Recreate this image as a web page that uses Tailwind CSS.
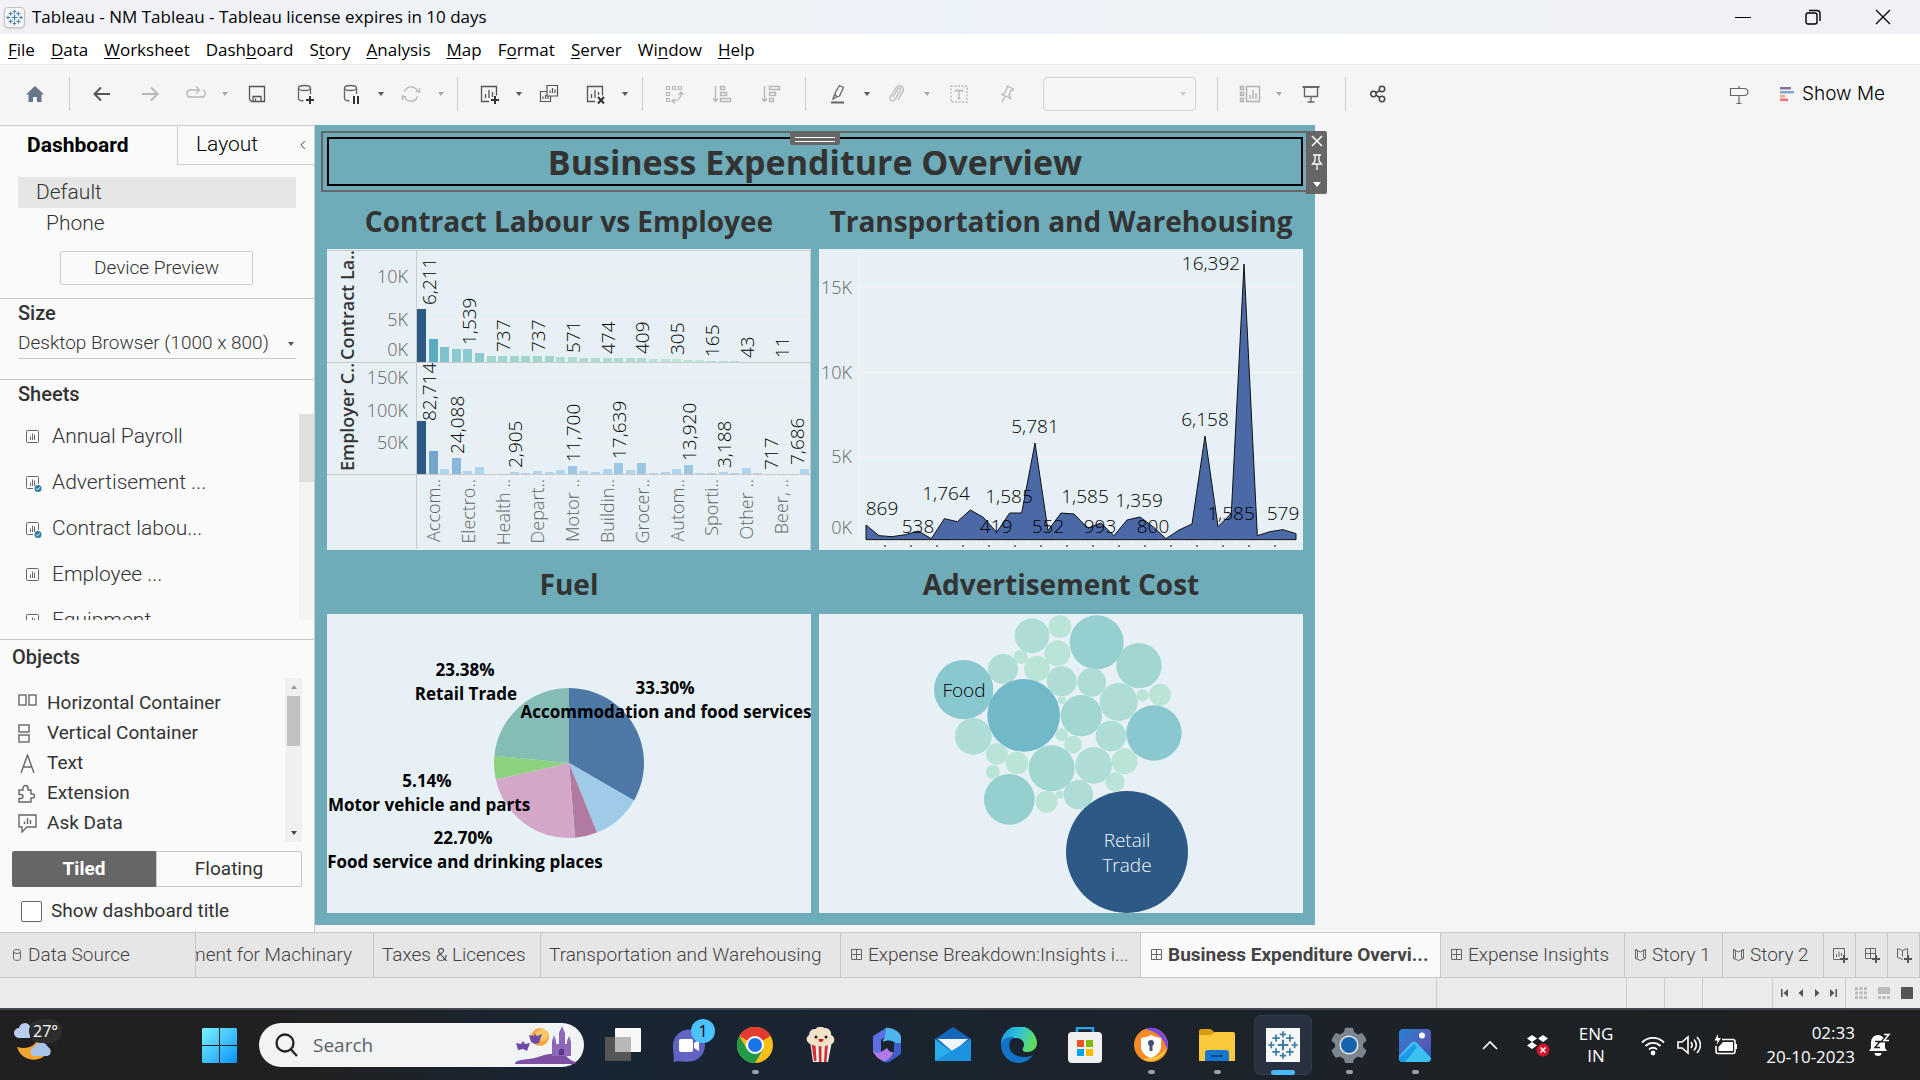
<!DOCTYPE html>
<html lang="en">
<head>
<meta charset="utf-8">
<title>Tableau - NM Tableau</title>
<script src="https://cdn.jsdelivr.net/npm/@tailwindcss/browser@4"></script>
</head>
<body class="flex min-h-screen flex-col overflow-hidden bg-[#f5f5f5] font-['Open_Sans','Noto_Sans',sans-serif] text-[#333]">

<svg class="hidden">
  <symbol id="tableau" viewBox="0 0 32 32">
    <g fill="none" stroke="#3a7ca5" stroke-width="1.6">
      <path stroke-width="2" d="M16 11v10M11 16h10"/>
      <path d="M16 3v6M13 6h6M16 23v6M13 26h6M5 13v6M2 16h6M27 13v6M24 16h6M9.500 6v7M6 9.500h7M22.500 6v7M19 9.500h7M9.500 19v7M6 22.500h7M22.500 19v7M19 22.500h7"/>
    </g>
  </symbol>
  <symbol id="sheet" viewBox="0 0 18 18">
    <g fill="none" stroke="#666" stroke-width="1"><rect x="2.500" y="2.500" width="12" height="12" rx="1"/><path d="M6.500 12V8.500M8.500 12V5.500M10.500 12V6.500"/></g>
  </symbol>
  <symbol id="sheetused" viewBox="0 0 18 18">
    <g fill="none" stroke="#666" stroke-width="1"><path d="M9 14.500H3.500a1 1 0 0 1-1-1v-10a1 1 0 0 1 1-1h10a1 1 0 0 1 1 1V10M6.500 12V8.500M8.500 12V5.500M10.500 12V6.500"/></g>
    <circle cx="14" cy="14.500" r="3.500" fill="#2f7f9f"/><path d="M12.300 14.500l1.300 1.300 2.200-2.500" fill="none" stroke="#fff" stroke-width="1"/>
  </symbol>
  <symbol id="dash" viewBox="0 0 14 14"><path d="M1.500 1.500h10v10h-10zM6.500 1.500v10M1.500 6.500h10" fill="none" stroke="#666"/></symbol>
  <symbol id="story" viewBox="0 0 14 14"><path d="M1.500 1.500l2 1v7l-2 1zM11.500 1.500l-2 1v7l2 1zM1.500 1.500l5 2.500 5-2.500M1.500 10.500l5 2 5-2" fill="none" stroke="#666"/></symbol>
  <symbol id="caret" viewBox="0 0 10 10"><path d="M2 3h6L5 7z" fill="currentColor"/></symbol>
</svg>

<header class="flex h-[34px] shrink-0 items-center bg-gradient-to-r from-[#f1f1f6] via-[#ecf3f8] to-[#f1f1f6] pr-[2px] text-black">
  <svg class="ml-1 size-[21px] rounded-sm border border-[#c4c4c4] bg-[#f7f7f7] shadow"><use href="#tableau"/></svg>
  <h1 class="ml-[7px] text-[17px]">Tableau - NM Tableau - Tableau license expires in 10 days</h1>
  <div class="ml-auto flex items-center">
    <button class="flex h-[34px] w-[70px] items-center justify-center" aria-label="Minimize"><svg class="size-4" viewBox="0 0 16 16"><path d="M0 8.500h16" stroke="#000"/></svg></button>
    <button class="flex h-[34px] w-[70px] items-center justify-center" aria-label="Restore"><svg class="size-4" viewBox="0 0 16 16" fill="none" stroke="#000" stroke-width="1.400"><rect x="1" y="4" width="11" height="11" rx="2"/><path d="M4 1.500h8a3 3 0 0 1 3 3v7.500"/></svg></button>
    <button class="flex h-[34px] w-[70px] items-center justify-center" aria-label="Close"><svg class="size-4" viewBox="0 0 16 16"><path d="M1 1l14 14M15 1L1 15" stroke="#000" stroke-width="1.300"/></svg></button>
  </div>
</header>

<nav class="flex h-[30px] shrink-0 items-center gap-4 bg-white pl-2 pt-[2px] text-[17px] text-black underline-offset-2" aria-label="Menu">
  <a href="#"><u>F</u>ile</a><a href="#"><u>D</u>ata</a><a href="#"><u>W</u>orksheet</a><a href="#">Dash<u>b</u>oard</a><a href="#">S<u>t</u>ory</a><a href="#"><u>A</u>nalysis</a><a href="#"><u>M</u>ap</a><a href="#">F<u>o</u>rmat</a><a href="#"><u>S</u>erver</a><a href="#">Wi<u>n</u>dow</a><a href="#"><u>H</u>elp</a>
</nav>

<div class="flex h-[61px] shrink-0 items-center border-t border-[#ececec] bg-[#f5f5f5] pb-[2px] pl-3 text-[#555]">
  <button class="flex w-[46px] justify-center" aria-label="Start page"><svg class="size-6" viewBox="0 0 24 24" fill="#66758a"><path d="M12 4l9 8.500h-2.500V20h-4.500v-5h-4v5H5.500v-7.500H3z"/></svg></button>
  <i class="ml-[11px] h-[34px] w-px bg-[#ccc]"></i>
  <button class="ml-2 flex w-12 justify-center" aria-label="Undo"><svg class="size-6" viewBox="0 0 24 24" fill="none" stroke="#555" stroke-width="2"><path d="M20 12H5M11 5.500L4.500 12l6.500 6.500"/></svg></button>
  <button class="flex w-12 justify-center" aria-label="Redo"><svg class="size-6" viewBox="0 0 24 24" fill="none" stroke="#b8b8b8" stroke-width="2"><path d="M4 12h15M13 5.500l6.500 6.500-6.500 6.500"/></svg></button>
  <button class="flex w-11 justify-center" aria-label="Replay"><svg class="size-6" viewBox="0 0 24 24" fill="none" stroke="#b8b8b8" stroke-width="1.300"><path d="M14 8H6a3 3 0 0 0-3 3v1a3 3 0 0 0 3 3h12a3 3 0 0 0 3-3v-1a3 3 0 0 0-2-2.800M12 4.500L15.500 8 12 11.500"/></svg></button>
  <button class="flex w-[14px] justify-center text-[#aaa]" aria-label="Replay options"><svg class="size-[10px]"><use href="#caret"/></svg></button>
  <button class="flex w-[50px] justify-center" aria-label="Save"><svg class="size-6" viewBox="0 0 24 24" fill="none" stroke="#555" stroke-width="1.300"><path d="M4.500 4.500h15v15h-13l-2-2zM8 19.500v-5h8v5M10.500 19v-2.500"/></svg></button>
  <button class="flex w-[46px] justify-center" aria-label="New data source"><svg class="size-6" viewBox="0 0 24 24" fill="none" stroke="#666" stroke-width="1.300"><ellipse cx="11.500" cy="6" rx="6" ry="2.500"/><path d="M5.500 6v10.500c0 1.500 2 2.300 5 2.500M17.500 6v6"/><path stroke="#333" stroke-width="2" d="M17 14v8M13 18h8"/></svg></button>
  <button class="flex w-[46px] justify-center" aria-label="Pause updates"><svg class="size-6" viewBox="0 0 24 24" fill="none" stroke="#666" stroke-width="1.300"><ellipse cx="11.500" cy="6" rx="6" ry="2.500"/><path d="M5.500 6v10.500c0 1.500 2 2.300 5 2.500M17.500 6v6"/><path stroke="#333" stroke-width="2" d="M15 14v8M19 14v8"/></svg></button>
  <button class="flex w-[14px] justify-center" aria-label="Pause options"><svg class="size-[10px]"><use href="#caret"/></svg></button>
  <button class="flex w-[46px] justify-center" aria-label="Refresh"><svg class="size-6" viewBox="0 0 24 24" fill="none" stroke="#b8b8b8" stroke-width="1.400"><path d="M5.500 9.500a7 7 0 0 1 13-.5M20.500 6v4l-3.500-1M18.500 14.500a7 7 0 0 1-13 .5M3.500 18v-4l3.500 1"/></svg></button>
  <button class="flex w-[14px] justify-center text-[#aaa]" aria-label="Refresh options"><svg class="size-[10px]"><use href="#caret"/></svg></button>
  <i class="ml-[9px] h-[34px] w-px bg-[#ccc]"></i>
  <button class="ml-2 flex w-[46px] justify-center" aria-label="New worksheet"><svg class="size-6" viewBox="0 0 24 24" fill="none" stroke="#555" stroke-width="1.300"><path d="M12 19.500H4.500v-15h15v9M8.500 16v-4M12 16V8M15.500 15v-5"/><path stroke="#333" stroke-width="2" d="M18 14v8M14 18h8"/></svg></button>
  <button class="flex w-[14px] justify-center" aria-label="New worksheet options"><svg class="size-[10px]"><use href="#caret"/></svg></button>
  <button class="flex w-[46px] justify-center" aria-label="Duplicate"><svg class="size-6" viewBox="0 0 24 24" fill="none" stroke="#555" stroke-width="1.200"><path d="M10 3.500h10.500v10.500H10zM10 9.500H3.500v10h10V14M13 11V8.500M15.500 11V6M18 11V7.500M6 17v-2.500M8.500 17v-4M11 17v-3"/></svg></button>
  <button class="flex w-[46px] justify-center" aria-label="Clear sheet"><svg class="size-6" viewBox="0 0 24 24" fill="none" stroke="#555" stroke-width="1.300"><path d="M12 19.500H4.500v-15h15v9M8.500 16v-4M12 16V8M15.500 13v-3"/><path stroke="#333" stroke-width="2" d="M15 15l6 6.500M21 15l-6 6.500"/></svg></button>
  <button class="flex w-[14px] justify-center" aria-label="Clear options"><svg class="size-[10px]"><use href="#caret"/></svg></button>
  <i class="ml-[10px] h-[34px] w-px bg-[#ccc]"></i>
  <button class="ml-2 flex w-[46px] justify-center" aria-label="Swap rows and columns"><svg class="size-6" viewBox="0 0 24 24" fill="none" stroke="#b8b8b8" stroke-width="1.200"><path d="M4.500 4.500h3v3h-3zM10.500 4.500h3v3h-3zM16.500 4.500h3v3h-3zM4.500 10.500h3v3h-3zM4.500 16.500h3v3h-3zM19 11c0 5-3 8-8 8M16.500 13l2.500-3 2.500 3M13 21.500l-3-2.500 3-2.500"/></svg></button>
  <button class="flex w-[50px] justify-center" aria-label="Sort ascending"><svg class="size-6" viewBox="0 0 24 24" fill="none" stroke="#b8b8b8" stroke-width="1.400"><path d="M5.500 4v15M3 16.500l2.500 3 2.500-3M10.500 4.500h4v3h-4zM10.500 10.500h6v3h-6zM10.500 16.500h10v3h-10z"/></svg></button>
  <button class="flex w-12 justify-center" aria-label="Sort descending"><svg class="size-6" viewBox="0 0 24 24" fill="none" stroke="#b8b8b8" stroke-width="1.400"><path d="M5.500 4v15M3 16.500l2.500 3 2.500-3M10.500 4.500h10v3h-10zM10.500 10.500h6v3h-6zM10.500 16.500h4v3h-4z"/></svg></button>
  <i class="ml-[10px] h-[34px] w-px bg-[#ccc]"></i>
  <button class="ml-[10px] flex w-11 justify-center" aria-label="Highlight"><svg class="size-6" viewBox="0 0 24 24" fill="none" stroke="#666" stroke-width="1.300"><path d="M9 11l4.500-7.500 4 2L13.500 14l-3 1zM9 11l1.500 4M8.500 12.500L7 17l3-1.500"/><path stroke-width="2" d="M5 20.500h13"/></svg></button>
  <button class="flex w-[14px] justify-center" aria-label="Highlight options"><svg class="size-[10px]"><use href="#caret"/></svg></button>
  <button class="flex w-[46px] justify-center" aria-label="Group"><svg class="size-6" viewBox="0 0 24 24" fill="none" stroke="#b8b8b8" stroke-width="1.300"><path d="M8 15l5-8.500c1-1.500 3.500 0 2.500 1.700L10 17.500c-2 3-6.500.5-4.700-2.500l6-9.500c2.500-4 9-.5 6.500 4L13 18"/></svg></button>
  <button class="flex w-[14px] justify-center text-[#aaa]" aria-label="Group options"><svg class="size-[10px]"><use href="#caret"/></svg></button>
  <button class="flex w-[50px] justify-center" aria-label="Show mark labels"><svg class="size-6" viewBox="0 0 24 24" fill="none" stroke="#b8b8b8" stroke-width="1.300"><rect x="4" y="4" width="16" height="16" stroke-dasharray="2 1.500"/><path d="M8.500 10V8.500h7V10M12 8.500V16M10.500 16.500h3"/></svg></button>
  <button class="flex w-[46px] justify-center" aria-label="Fix axes"><svg class="size-6" viewBox="0 0 24 24" fill="none" stroke="#b8b8b8" stroke-width="1.300"><path d="M12 4l6.500 3-1 1.500-1.500-.2-2 4.700 1.500 3.500-8.500-4L9.500 11l2.500-4.500zM10 14.500L7 20"/></svg></button>
  <div class="relative ml-[13px] flex items-center text-[#ccc]">
    <select class="h-[34px] w-[153px] appearance-none rounded-sm border border-[#d4d4d4] bg-[#f5f5f5]" aria-label="Fit" disabled><option></option></select>
    <svg class="absolute right-2 size-[10px]"><use href="#caret"/></svg>
  </div>
  <i class="ml-[21px] h-[34px] w-px bg-[#ccc]"></i>
  <button class="ml-[10px] flex w-11 justify-center" aria-label="Show cards"><svg class="size-6" viewBox="0 0 24 24" fill="none" stroke="#b0b0b0" stroke-width="1.400"><path d="M2.500 4.500h3v3h-3zM2.500 10.500h3v3h-3zM2.500 16.500h3v3h-3zM8.500 4.500h13v15h-13zM12 17v-4M15 17V8M18 17v-6"/></svg></button>
  <button class="flex w-[14px] justify-center text-[#aaa]" aria-label="Card options"><svg class="size-[10px]"><use href="#caret"/></svg></button>
  <button class="flex w-[50px] justify-center" aria-label="Presentation mode"><svg class="size-6" viewBox="0 0 24 24" fill="none" stroke="#666" stroke-width="1.400"><path stroke-width="2" d="M3.500 5h17"/><path d="M5.500 6v8.500h13V6M12 14.500v5M8.500 20h7"/></svg></button>
  <i class="ml-[9px] h-[34px] w-px bg-[#ccc]"></i>
  <button class="ml-2 flex w-12 justify-center" aria-label="Share"><svg class="size-6" viewBox="0 0 24 24" fill="none" stroke="#444" stroke-width="1.500"><circle cx="7.500" cy="12" r="2.700"/><circle cx="16" cy="7" r="2.700"/><circle cx="16" cy="17" r="2.700"/><path d="M10 10.800L13.700 8.500M10 13.200l3.700 2.300"/></svg></button>
  <div class="ml-auto flex items-center pr-[35px]">
    <button aria-label="Guide"><svg class="size-6" viewBox="0 0 24 24" fill="none" stroke="#666" stroke-width="1.200"><path d="M3.500 6.500h14c2 0 3.500 2 3.500 3.500s-1.500 3.500-3.500 3.500h-14zM12 4v2.500M12 13.500V21M9.500 21.500h5"/></svg></button>
    <button class="ml-[29px] flex items-center gap-2 font-['Inter',sans-serif] text-[19px] font-light text-black"><svg class="size-[14px]" viewBox="0 0 14 14"><path fill="#8a6f9b" d="M0 0h11v2.500H0z"/><path fill="#7fa7cf" d="M0 4h14v2.500H0z"/><path fill="#f5a67c" d="M0 8h5v2.500H0z"/><path fill="#fb6d82" d="M0 11.500h8V14H0z"/></svg>Show Me</button>
  </div>
</div>

<main class="flex flex-1">
  <aside class="flex w-[315px] shrink-0 flex-col border-r border-t border-[#ccc] bg-[#fafafa] font-['Roboto',sans-serif] text-[19px] font-light">
    <div class="flex h-[39px] text-[21px]">
      <button class="w-[177px] pl-[27px] text-left font-bold text-black">Dashboard</button>
      <button class="flex flex-1 items-center justify-between border-b border-l border-[#ccc] pl-[18px] pr-[7px] text-black">Layout<svg class="size-2" viewBox="0 0 8 10"><path d="M6.500 0L1.500 5l5 5" fill="none" stroke="#666" stroke-width="1.300"/></svg></button>
    </div>
    <ul class="mt-3 px-[18px] text-[21px]">
      <li class="h-[31px] bg-[#e6e6e6] pl-[18px] leading-[30px]">Default</li>
      <li class="h-[31px] pl-[28px] leading-[30px]">Phone</li>
    </ul>
    <button class="ml-[60px] mt-3 h-[34px] w-[193px] rounded-xs border border-[#ccc]">Device Preview</button>
    <section class="mt-[13px] h-[81px] border-t border-[#c8c8c8] px-[18px]">
      <h2 class="h-[30px] text-xl font-medium leading-7">Size</h2>
      <div class="relative flex items-center">
        <select class="h-[30px] w-full appearance-none border-b border-[#c8c8c8] text-[19px] font-light outline-none" aria-label="Dashboard size"><option>Desktop Browser (1000 x 800)</option></select>
        <svg class="absolute right-0 size-[10px] text-[#555]"><use href="#caret"/></svg>
      </div>
    </section>
    <section class="h-[260px] border-t border-[#c8c8c8]">
      <h2 class="h-[34px] pl-[18px] text-xl font-medium leading-7">Sheets</h2>
      <div class="flex h-[206px] overflow-hidden">
        <ul class="flex-1 pl-6 text-[21px]">
          <li class="flex h-[46px] items-center gap-[10px]"><svg class="size-[18px]"><use href="#sheet"/></svg>Annual Payroll</li>
          <li class="flex h-[46px] items-center gap-[10px]"><svg class="size-[18px]"><use href="#sheetused"/></svg>Advertisement ...</li>
          <li class="flex h-[46px] items-center gap-[10px]"><svg class="size-[18px]"><use href="#sheetused"/></svg>Contract labou...</li>
          <li class="flex h-[46px] items-center gap-[10px]"><svg class="size-[18px]"><use href="#sheet"/></svg>Employee ...</li>
          <li class="flex h-[46px] items-center gap-[10px]"><svg class="size-[18px]"><use href="#sheet"/></svg>Equipment ...</li>
        </ul>
        <div class="w-[15px] bg-[#f3f3f3]"><div class="h-[68px] bg-[#e0e0e0]"></div></div>
      </div>
    </section>
    <section class="flex-1 border-t border-[#c8c8c8] px-3 font-normal">
      <h2 class="h-[38px] text-xl font-medium leading-[34px]">Objects</h2>
      <div class="flex">
        <ul class="flex-1 pl-[6px] pt-[10px]">
          <li class="flex h-[30px] items-center gap-[10px]"><svg class="size-[19px]" viewBox="0 0 19 19" fill="none" stroke="#666" stroke-width="1.400"><rect x="1" y="1" width="7" height="10"/><rect x="11" y="1" width="7" height="10"/></svg>Horizontal Container</li>
          <li class="flex h-[30px] items-center gap-[10px]"><svg class="size-[19px]" viewBox="0 0 19 19" fill="none" stroke="#666" stroke-width="1.400"><rect x="1" y="1" width="10" height="7"/><rect x="1" y="11" width="10" height="7"/></svg>Vertical Container</li>
          <li class="flex h-[30px] items-center gap-[10px]"><svg class="size-[19px]" viewBox="0 0 19 19" fill="none" stroke="#666" stroke-width="1.400"><path d="M3 19L9.500 1 16 19M5.500 13h8"/></svg>Text</li>
          <li class="flex h-[30px] items-center gap-[10px]"><svg class="size-[19px]" viewBox="0 0 19 19" fill="none" stroke="#666" stroke-width="1.400"><path d="M1 8V6h4V4a2.500 2.500 0 1 1 5 0v2h3v4h1.500a2 2 0 1 1 0 4H13v4H1v-3.500h2a2 2 0 1 0 0-4H1z"/></svg>Extension</li>
          <li class="flex h-[30px] items-center gap-[10px]"><svg class="size-[19px]" viewBox="0 0 19 19" fill="none" stroke="#666" stroke-width="1.400"><path d="M1 1h17v12H9l-5 5v-5H1zM6.500 10V7.500M9.500 10V4M12.500 10V6"/></svg>Ask Data</li>
        </ul>
        <div class="flex h-[164px] w-[17px] flex-col items-center justify-between bg-[#f0f0f0] text-[#999]">
          <div class="flex flex-col items-center"><svg class="my-1 size-[10px] rotate-180"><use href="#caret"/></svg><div class="h-[50px] w-[13px] bg-[#c1c1c1]"></div></div>
          <svg class="mb-1 size-[10px] text-[#444]"><use href="#caret"/></svg>
        </div>
      </div>
      <div class="mt-[9px] flex h-9">
        <button class="flex-1 rounded-l-xs bg-[#666] font-bold text-white">Tiled</button>
        <button class="flex-1 rounded-r-xs border border-[#c8c8c8]">Floating</button>
      </div>
      <label class="ml-[9px] mt-[10px] flex items-center gap-[9px]"><input type="checkbox" class="size-[21px] appearance-none rounded-xs border border-[#666] bg-white">Show dashboard title</label>
    </section>
  </aside>

  <div class="flex-1 bg-[#f5f5f5]">
    <article class="h-[800px] w-[1000px] bg-[#6eacb9] px-3 pt-[6px]">
      <div class="relative -mx-[6px] h-[61px] border-2 border-[#666] p-1">
        <h2 class="flex h-full items-center justify-center border-2 border-black pt-[2px] text-[34px] font-bold">Business Expenditure Overview</h2>
        <div class="absolute left-1/2 top-0 flex h-3 w-[50px] -translate-x-1/2 flex-col justify-center gap-[3px] rounded-b-xs bg-[#666] px-[5px]"><i class="h-px bg-white"></i><i class="h-px bg-white"></i></div>
        <div class="absolute -right-[20px] -top-[2px] flex h-[63px] w-[21px] flex-col items-center justify-around rounded-r-xs bg-[#666]">
          <svg class="size-3" viewBox="0 0 12 12"><path d="M1 1l10 10M11 1L1 11" stroke="#fff" stroke-width="1.500"/></svg>
          <svg class="h-4 w-3" viewBox="0 0 12 16" fill="none" stroke="#fff" stroke-width="1.300"><path d="M2 1h8M4 1v6l-2.500 3h9L8 7V1M6 10v6"/></svg>
          <svg class="size-3 text-white" viewBox="0 0 12 12"><path d="M2 4h8L6 9z" fill="#fff"/></svg>
        </div>
      </div>
      <div class="grid grid-cols-2 gap-x-2">
        <section>
          <h3 class="flex h-[57px] items-center justify-center whitespace-nowrap text-[28px] font-bold">Contract Labour vs Employee</h3>
          <svg id="bars" class="h-[301px] w-full bg-[#e6f0f5]" viewBox="0 0 484 301" font-size="18">
            <path d="M90 27.500h394M90 70.500h394M90 128.500h394M90 161.500h394M90 193.500h394" stroke="#f1f1f1"/>
            <path d="M0 1.500h484M0 113.500h484M0 225.500h484M89.500 1v299M483.500 1v299" stroke="#c9c9c9"/>
          </svg>
        </section>
        <section>
          <h3 class="flex h-[57px] items-center justify-center whitespace-nowrap text-[28px] font-bold">Transportation and Warehousing</h3>
          <svg id="area" class="h-[301px] w-full bg-[#e6f0f5]" viewBox="0 0 484 301" font-size="18">
            <path d="M35 38.500h449M35 123.500h449M35 207.500h449M35 291.500h449M40.500 0v295" stroke="#f3f3f3"/>
            <svg width="484" height="301" viewBox="12 27 1452 903"><path fill="#4a69a6" stroke="#111" stroke-width="3" d="M153 899V855L192 887L231 890L271 884L310 873L349 896L388 836L427 845L466 810L505 832L545 877L584 819L620 819L660 609L699 872L738 819L777 822L819 865L857 849L897 887L936 840L975 831L1014 860L1053 896L1092 870L1131 852L1170 588L1209 860L1249 820L1287 72L1327 887L1365 875L1404 869L1443 881V899Z"/></svg>
          </svg>
        </section>
        <section>
          <h3 class="flex h-16 items-center justify-center pt-1 text-[28px] font-bold">Fuel</h3>
          <svg id="pie" class="h-[299px] w-full bg-[#e6f0f5]" viewBox="0 0 484 299" font-size="17" font-weight="700">
            <path fill="#4e79a7" d="M242 149V74A75 75 0 0 1 307 186.400Z"/>
            <path fill="#a0cbe8" d="M242 149L307 186.400A75 75 0 0 1 269.900 218.600Z"/>
            <path fill="#b07aa1" d="M242 149L269.900 218.600A75 75 0 0 1 248 223.800Z"/>
            <path fill="#d4a6c8" d="M242 149L248 223.800A75 75 0 0 1 168.800 165.500Z"/>
            <path fill="#8cd17d" d="M242 149L168.800 165.500A75 75 0 0 1 167.400 141.700Z"/>
            <path fill="#86bcb6" d="M242 149L167.400 141.700A75 75 0 0 1 242 74Z"/>
          </svg>
        </section>
        <section>
          <h3 class="flex h-16 items-center justify-center pt-1 text-[28px] font-bold">Advertisement Cost</h3>
          <svg id="bubbles" class="h-[299px] w-full bg-[#e6f0f5]" viewBox="0 0 484 299" font-size="19" font-weight="300">
            <svg id="circles" width="484" height="299" viewBox="-243 42 1452 897"></svg>
          </svg>
        </section>
      </div>
    </article>
  </div>
</main>

<nav class="flex h-[46px] shrink-0 items-stretch overflow-hidden border-y border-[#c8c8c8] bg-[#e6e6e6] font-['Roboto',sans-serif] text-[19px] font-light whitespace-nowrap text-[#444]" aria-label="Sheets">
  <a href="#" class="flex w-[196px] items-center gap-1 border-r border-[#c8c8c8] pl-3"><svg class="h-[14px] w-3" viewBox="0 0 12 14" fill="none" stroke="#666"><ellipse cx="5" cy="3.500" rx="3.500" ry="2"/><path d="M1.500 3.500v7c0 2.500 7 2.500 7 0v-7"/></svg>Data Source</a>
  <a href="#" class="flex w-[178px] items-center justify-end overflow-hidden border-r border-[#c8c8c8] pr-[21px]">ment for Machinary</a>
  <a href="#" class="flex w-[167px] items-center border-r border-[#c8c8c8] pl-2">Taxes &amp; Licences</a>
  <a href="#" class="flex w-[300px] items-center border-r border-[#c8c8c8] pl-2">Transportation and Warehousing</a>
  <a href="#" class="flex w-[300px] items-center gap-1 border-r border-[#c8c8c8] pl-[9px]"><svg class="size-[14px]"><use href="#dash"/></svg>Expense Breakdown:Insights i...</a>
  <a href="#" class="flex w-[300px] items-center gap-1 border-r border-[#c8c8c8] bg-[#fafafa] pl-[9px] font-bold"><svg class="size-[14px]"><use href="#dash"/></svg>Business Expenditure Overvi...</a>
  <a href="#" class="flex w-[184px] items-center gap-1 border-r border-[#c8c8c8] pl-[9px]"><svg class="size-[14px]"><use href="#dash"/></svg>Expense Insights</a>
  <a href="#" class="flex w-[98px] items-center gap-1 border-r border-[#c8c8c8] pl-[9px]"><svg class="size-[14px]"><use href="#story"/></svg>Story 1</a>
  <a href="#" class="flex w-[101px] items-center gap-1 border-r border-[#c8c8c8] pl-[9px]"><svg class="size-[14px]"><use href="#story"/></svg>Story 2</a>
  <button class="flex flex-1 items-center justify-center border-r border-[#c8c8c8]" aria-label="New worksheet"><svg class="size-4" viewBox="0 0 16 16" fill="none" stroke="#666"><path d="M8 12.500H1.500v-11h11V8M4.500 10V7M7 10V4.500M9.500 9V6"/><path stroke="#555" stroke-width="2" d="M12 8v8M8 12h8"/></svg></button>
  <button class="flex flex-1 items-center justify-center border-r border-[#c8c8c8]" aria-label="New dashboard"><svg class="size-4" viewBox="0 0 16 16" fill="none" stroke="#666"><path d="M8 11.500H1.500v-10h10V8M6.500 1.500v10M1.500 6.500h10"/><path stroke="#555" stroke-width="2" d="M12 8v8M8 12h8"/></svg></button>
  <button class="flex flex-1 items-center justify-center border-r border-[#c8c8c8]" aria-label="New story"><svg class="size-4" viewBox="0 0 16 16" fill="none" stroke="#666"><path d="M7 12.500l-5.500-2v-9l5 2 5-2V8M6.500 3.500v6"/><path stroke="#555" stroke-width="2" d="M12 8v8M8 12h8"/></svg></button>
</nav>

<div class="flex h-[30px] shrink-0 items-stretch justify-end bg-[#ebebeb] text-[#555]">
  <i class="w-[190px] border-l border-[#ccc]"></i><i class="w-[38px] border-l border-[#ccc]"></i><i class="w-[38px] border-l border-[#ccc]"></i><i class="w-[70px] border-l border-[#ccc]"></i>
  <div class="flex w-[73px] items-center justify-center gap-2 border-l border-[#ccc]">
    <button aria-label="First"><svg class="size-2" viewBox="0 0 8 8" fill="#555"><path d="M0 0h1.500v8H0zM7 0v8L2.500 4z"/></svg></button>
    <button aria-label="Previous"><svg class="size-2" viewBox="0 0 8 8" fill="#555"><path d="M6 0v8L1.500 4z"/></svg></button>
    <button aria-label="Next"><svg class="size-2" viewBox="0 0 8 8" fill="#555"><path d="M2 0v8l4.500-4z"/></svg></button>
    <button aria-label="Last"><svg class="size-2" viewBox="0 0 8 8" fill="#555"><path d="M6.500 0H8v8H6.500zM1 0v8l4.500-4z"/></svg></button>
  </div>
  <div class="flex w-[75px] items-center justify-end gap-[11px] border-l border-[#ccc] pr-[7px]">
    <button aria-label="Sheet sorter"><svg class="size-3" viewBox="0 0 12 12" fill="#bbb"><path d="M0 0h3v3H0zM4.500 0h3v3h-3zM9 0h3v3H9zM0 4.500h3v3H0zM4.500 4.500h3v3h-3zM9 4.500h3v3H9zM0 9h3v3H0zM4.500 9h3v3h-3zM9 9h3v3H9z"/></svg></button>
    <button aria-label="Filmstrip"><svg class="size-3" viewBox="0 0 12 12" fill="#bbb"><path d="M0 0h12v7H0zM0 9h3v3H0zM4.500 9h3v3h-3zM9 9h3v3H9z"/></svg></button>
    <button aria-label="Tabs"><svg class="size-3" viewBox="0 0 12 12" fill="#555"><rect width="12" height="12" rx="1"/></svg></button>
  </div>
</div>

<footer class="flex h-[72px] shrink-0 items-center border-t-2 border-[#45484e] bg-gradient-to-r from-[#202020] from-15% via-[#182534] via-30% to-[#1f2020] text-white">
  <button class="relative ml-[14px] flex h-[52px] w-12" aria-label="Weather">
    <svg class="h-[44px] w-[48px]" viewBox="0 0 48 44"><path d="M5 19a5 5 0 0 1 0-10 6 6 0 0 1 11-2v12z" fill="#b8cdf0"/><path d="M3 28c12 3 18-2 20-7 8 1 12 8 9 14-5 8-24 9-29-7z" fill="#f4a430"/><path d="M19 37a5 5 0 0 1 1-9 8 8 0 0 1 14 0 5 5 0 0 1 0 9z" fill="#a9c2ea"/><rect x="15" y="0" width="33" height="24" rx="12" fill="#2d2d2d"/></svg>
    <span class="absolute left-[19px] top-0 text-base">27°</span>
  </button>
  <button class="ml-[140px]" aria-label="Start"><svg class="size-[35px]" viewBox="0 0 35 35"><defs><linearGradient id="win" x1="0" y1="0" x2="1" y2="1"><stop stop-color="#7cf3ff"/><stop offset="1" stop-color="#0a93fb"/></linearGradient></defs><path fill="url(#win)" d="M1 0h16v17H0V1zM18 0h16l1 1v16H18zM0 18h17v17H1l-1-1zM18 18h17v16l-1 1H18z"/></svg></button>
  <label class="ml-[22px] flex h-11 w-[325px] items-center rounded-full bg-[#f1f3f5] pl-[15px] pr-[9px]">
    <svg class="size-6" viewBox="0 0 24 24" fill="none" stroke="#222" stroke-width="2.300"><circle cx="11" cy="10" r="8.500"/><path d="M17 16.500l6 6.500"/></svg>
    <input type="search" placeholder="Search" class="ml-[15px] w-[170px] bg-transparent text-[19px] text-black outline-none placeholder:text-[#5d5f63]">
    <svg class="ml-auto h-[38px] w-[60px]" viewBox="0 0 60 38"><circle cx="25" cy="11" r="9" fill="#f3a83c"/><circle cx="27" cy="9" r="6" fill="#f9c869"/><path d="M1 17l5 1 2-3 2 3 5-1-3 8-4-2-5 1zM14 9l5 1 1-2 2 2 5-2-3 9-4 1-4-2z" fill="#6f4aa6"/><path d="M0 38c0-4 6-4 14-5 8-1 14-4 20-5h14c3 0 4 5 12 8v2z" fill="#7e50a5"/><path d="M37 30V15l2-6 2 6v3h3V7l3-7 3 7v11h2v-3l2-5 2 5v15z" fill="#8d68b8"/><path d="M44 25a2.500 2.500 0 0 1 5 0v4h-5z" fill="#5a3487"/></svg>
  </label>
  <div class="ml-[6px] flex h-full items-center">
    <button class="flex w-[66px] justify-center" aria-label="Task view"><svg class="size-9" viewBox="0 0 36 36"><rect x="10" y="1" width="26" height="24" rx="1" fill="#f7f7f7"/><rect y="10" width="26" height="24" rx="1" fill="#555"/><path d="M10 10h16v15H10z" fill="#b8b8b8"/></svg></button>
    <button class="relative flex w-[66px] justify-center" aria-label="Chat"><svg class="size-9" viewBox="0 0 36 36"><path d="M2 35c2-4 0-6 0-15a16 16 0 1 1 20 14c-8 2-13-1-20 1z" fill="#6264c4"/><rect x="8" y="12" width="14" height="13" rx="2" fill="#fff"/><path d="M23 16l5-3v11l-5-3z" fill="#fff"/></svg><span class="absolute -top-[8px] left-[35px] flex size-6 items-center justify-center rounded-full bg-[#4cc2ff] text-base text-black">1</span></button>
    <button class="relative flex w-[66px] justify-center" aria-label="Chrome"><svg class="size-9" viewBox="0 0 36 36"><circle cx="18" cy="18" r="18" fill="#fbc116"/><path d="M18 18L2.400 9A18 18 0 0 1 33.600 9z" fill="#e33b2e"/><path d="M18 0a18 18 0 0 1 15.600 9H18z" fill="#e33b2e"/><path d="M2.400 9A18 18 0 0 0 18 36l8-13.500H10.200z" fill="#229a49"/><circle cx="18" cy="18" r="9" fill="#fff"/><circle cx="18" cy="18" r="7" fill="#1a73e8"/></svg><i class="absolute -bottom-[11px] h-1 w-[7px] rounded-full bg-[#9aa0a6]"></i></button>
    <button class="flex w-[66px] justify-center" aria-label="Popcorn"><svg class="size-9" viewBox="0 0 36 36"><path d="M7 14l3 21h15l4-21z" fill="#f6f1ec"/><path d="M8.500 17l2.500 17h2.500L12.500 17zM15.500 17l.5 18h2.500V17zM22 17l-1 18h2.500l1.500-18z" fill="#d22f2f"/><path d="M7 17a5 5 0 0 1-1-9 6 6 0 0 1 7-6 5 5 0 0 1 8-1 6 6 0 0 1 7 7 5 5 0 0 1 1 9c-7 3-15 3-22 0z" fill="#f1e2ca"/><circle cx="13" cy="10" r="1.500" fill="#222"/><circle cx="23" cy="10" r="1.500" fill="#222"/><path d="M15.500 12h5a2.500 3 0 0 1-5 0z" fill="#c22"/></svg></button>
    <button class="flex w-[66px] justify-center" aria-label="Microsoft 365"><svg class="size-9" viewBox="0 0 36 36"><path d="M17 1L4 9v15c0 4 5 5 8 2V14c0-2 2-3 6-5z" fill="#5b6fe0"/><path d="M17 1c5-1 15 4 15 9v9l-7-4c-3-2-8-2-11 0 0-4 3-5 3-14z" fill="#4fb4ee"/><path d="M32 16v9c0 2-1 3-3 4l-9 6c-3 1-6 0-9-2 6 1 14-3 14-8v-9z" fill="#3d5fce"/><path d="M4 22c1 4 5 5 8 3l6-4c2 4 5 5 7 4-1 4-6 8-9 9-4 0-12-5-12-12z" fill="#b07be6"/></svg></button>
    <button class="flex w-[66px] justify-center" aria-label="Mail"><svg class="size-9" viewBox="0 0 36 36"><path d="M0 12L18 0l18 12v22H0z" fill="#1267b8"/><path d="M3 12h30L18 25z" fill="#f2f6fa"/><path d="M0 12l18 14L0 34z" fill="#29aeea"/><path d="M36 12L0 34h36z" fill="#1c93e0"/></svg></button>
    <button class="flex w-[66px] justify-center" aria-label="Edge"><svg class="size-9" viewBox="0 0 36 36"><defs><linearGradient id="edge" x1="0" y1="0" x2="1" y2=".3"><stop stop-color="#1c8bd6"/><stop offset=".5" stop-color="#2fc2df"/><stop offset="1" stop-color="#5edc62"/></linearGradient></defs><path d="M0 18A18 18 0 0 1 36 16c0 6-5 9-10 9-4 0-5-2-4-4 3-5-1-10-7-10C7 11 1 15 0 18z" fill="url(#edge)"/><path d="M0 18c1-6 7-9 13-8-5 3-6 9-3 14 4 6 13 8 22 4-4 6-10 8-15 8A18 18 0 0 1 0 18z" fill="#1272c6"/></svg></button>
    <button class="flex w-[66px] justify-center" aria-label="Store"><svg class="size-9" viewBox="0 0 36 36"><path d="M10 6V1h16v5" fill="none" stroke="#28a3e8" stroke-width="2.500"/><rect x="1" y="5" width="34" height="31" rx="4" fill="#f0f0f0"/><path d="M10 13h7v7h-7z" fill="#f25022"/><path d="M19 13h7v7h-7z" fill="#7fba00"/><path d="M10 22h7v7h-7z" fill="#00a4ef"/><path d="M19 22h7v7h-7z" fill="#ffb900"/></svg></button>
    <button class="relative flex w-[66px] justify-center" aria-label="Private browser"><svg class="size-9" viewBox="0 0 36 36"><circle cx="18" cy="18" r="17" fill="#f58b28"/><path d="M12 2a17 17 0 0 1 22 21c-3-12-9-18-22-21z" fill="#7a49e8"/><path d="M34 20A17 17 0 0 1 8 31c12 2 20-2 26-11z" fill="#fbcb3a"/><path d="M18 8c4 2 7 2 10 3v8c0 6-5 10-10 12-6-2-10-6-10-12v-8c3-1 7-1 10-3z" fill="#fff"/><circle cx="18" cy="16" r="3" fill="#46506e"/><path d="M16.500 17h3v7h-3z" fill="#46506e"/></svg><i class="absolute -bottom-[11px] h-1 w-[7px] rounded-full bg-[#9aa0a6]"></i></button>
    <button class="relative flex w-[66px] justify-center" aria-label="File Explorer"><svg class="size-9" viewBox="0 0 36 36"><path d="M0 4a2 2 0 0 1 2-2h10l4 4-3 4H0z" fill="#d99a10"/><path d="M0 8h12l4-3h18a2 2 0 0 1 2 2v27H0z" fill="#fcc83c"/><path d="M6 34V26a3 3 0 0 1 3-3h18a3 3 0 0 1 3 3v8z" fill="#1777cf"/><path d="M12 29h12" stroke="#0b4d90" stroke-width="2"/></svg><i class="absolute -bottom-[11px] h-1 w-[7px] rounded-full bg-[#9aa0a6]"></i></button>
    <button class="relative flex h-[60px] w-[66px] items-center justify-center" aria-label="Tableau"><i class="absolute inset-x-1 inset-y-0 rounded-md border border-[#303a4a] bg-[#28313f]"></i><svg class="relative size-[34px] bg-[#f7f7f7]"><use href="#tableau"/></svg><i class="absolute bottom-0 h-[5px] w-6 rounded-full bg-[#4cb8ff]"></i></button>
    <button class="relative flex w-[66px] justify-center" aria-label="Settings"><svg class="size-9" viewBox="0 0 36 36"><path d="M14 1c3-.5 6-.5 8 0l1 4 4 2.500 4-1.500c2 2 3.500 4.500 4.500 7.500L32 17v3l3.500 3.500c-1 3-2.500 5-4.500 7.500l-4-1.500-4 2.500-1 4c-3 .5-5 .5-8 0l-1-4-4-2.500-4 1.500c-2-2.500-3.500-4.500-4.500-7.500L4 20v-3L.500 13.500c1-3 2.500-5.500 4.500-7.500l4 1.500L13 5z" fill="#7d868e"/><circle cx="18" cy="18" r="9.500" fill="#e8ecef"/><circle cx="18" cy="18" r="8" fill="#1463ac"/></svg><i class="absolute -bottom-[11px] h-1 w-[7px] rounded-full bg-[#9aa0a6]"></i></button>
    <button class="relative flex w-[66px] justify-center" aria-label="Photos"><svg class="size-9" viewBox="0 0 36 36"><defs><linearGradient id="ph" x1="0" y1="0" x2="1" y2="1"><stop stop-color="#2183d8"/><stop offset=".6" stop-color="#5a5bb5"/><stop offset="1" stop-color="#155fb8"/></linearGradient></defs><rect x="2" y="2" width="32" height="33" rx="4" fill="url(#ph)"/><path d="M2 29l12-13c2-2 4-2 6 0l14 15a4 4 0 0 1-4 4H6a4 4 0 0 1-4-4z" fill="#3fc0f2"/><path d="M2 31l15-14 3 3L8 35H6a4 4 0 0 1-4-4z" fill="#1d9ae6"/><circle cx="25" cy="8.500" r="3" fill="#fff"/></svg><i class="absolute -bottom-[11px] h-1 w-[7px] rounded-full bg-[#9aa0a6]"></i></button>
  </div>
  <div class="ml-auto flex items-center pr-[29px]">
    <button aria-label="Hidden icons"><svg class="size-4" viewBox="0 0 16 16"><path d="M1 12l7-7 7 7" fill="none" stroke="#fff" stroke-width="1.700"/></svg></button>
    <button class="ml-[27px]" aria-label="Dropbox"><svg class="h-6 w-[26px]" viewBox="0 0 26 24"><path d="M7 2l5 3.500L7 9 2 5.500zM18 2l5 3.500L18 9l-5-3.500zM7 9l5 3.500L7 16l-5-3.500z" fill="#fff"/><circle cx="18" cy="17" r="6.500" fill="#d3142e"/><path d="M15.500 14.500l5 5M20.500 14.500l-5 5" stroke="#fff" stroke-width="1.500"/></svg></button>
    <button class="ml-[26px] w-[38px] text-center text-[17px] leading-[22px]">ENG<br>IN</button>
    <button class="ml-[26px] flex items-center gap-3" aria-label="Network, sound and battery">
      <svg class="size-6" viewBox="0 0 24 24" fill="none" stroke="#fff" stroke-width="1.800"><path d="M1 9.500a15.500 15.500 0 0 1 22 0M4.500 13a10.500 10.500 0 0 1 15 0M8 16.500a5.500 5.500 0 0 1 8 0"/><circle cx="12" cy="20" r="1.500" fill="#fff"/></svg>
      <svg class="size-6" viewBox="0 0 24 24" fill="none" stroke="#fff" stroke-width="1.600"><path d="M1 9v6h4l6 5V4L5 9zM14 9c1.500 2 1.500 4 0 6M17 6.500c3 3.500 3 7.500 0 11M20 4c4.500 5 4.500 11 0 16"/></svg>
      <svg class="size-6" viewBox="0 0 24 24" fill="none" stroke="#fff" stroke-width="1.600"><path d="M9 6.500h11a2 2 0 0 1 2 2v10a2 2 0 0 1-2 2H5a2 2 0 0 1-2-2V13M23.500 11v5"/><path d="M10 9h10v9H5.500v-4z" fill="#fff" stroke="none"/><path d="M5 1L1.500 7.500h3L3.500 12 8 5H5z" fill="#fff" stroke="none"/></svg>
    </button>
    <time class="ml-6 w-[94px] whitespace-nowrap text-right text-[17px] leading-6">02:33<br>20-10-2023</time>
    <button class="ml-3" aria-label="Notifications"><svg class="size-6" viewBox="0 0 24 24"><path d="M2 18l2-3V9a7 7 0 0 1 14 0v6l2 3zM7.500 20h7a3.500 3 0 0 1-7 0z" fill="#fff"/><path d="M8 8.500h5l-5 6h5" fill="none" stroke="#222" stroke-width="1.500"/><path d="M17 1.500h5l-5 6h5" fill="none" stroke="#222" stroke-width="4"/><path d="M17 1.500h5l-5 6h5" fill="none" stroke="#fff" stroke-width="1.500"/></svg></button>
  </div>
</footer>

<script>
const NS = 'http://www.w3.org/2000/svg';
function add(parent, tag, attrs, text) {
  const el = document.createElementNS(NS, tag);
  for (const k in attrs) el.setAttribute(k, attrs[k]);
  if (text) el.textContent = text;
  parent.appendChild(el);
}
const $ = id => document.getElementById(id);

// Bars of both measures: top edge of each bar, over a shared category axis
const bars = $('bars');
const contract = [60,90,98,100,100,104,107,107,107,107,107,107,108,108,109,109,109,109,109,109,110,110,110,111,111,112,112,112];
const contractFill = i => i === 0 ? '#2c5985' : i === 1 ? '#5aacc0' : i === 2 ? '#80c2cc' : i < 6 ? '#8ccad0' : i < 12 ? '#a0d5d0' : i < 20 ? '#addcd4' : '#b9e4d8';
contract.forEach((y, i) => add(bars, 'rect', {x: 90 + Math.round(i * 11.6), y, width: 9, height: 113 - y, fill: contractFill(i)}));
const employer = [172,202,220,209,222,218,225,225,223,224,222,223,221,217,222,223,220,214,221,214,224,223,220,216,224,224,223,224,219,224,225,225,225,220];
employer.forEach((y, i) => add(bars, 'rect', {x: 90 + Math.round(i * 11.6), y, width: 9, height: 225 - y, fill: y < 180 ? '#2c5985' : y < 205 ? '#74a5cc' : y < 210 ? '#8ab8dd' : y < 218 ? '#9cc8e6' : '#b0d6ef'}));
for (let i = 1; i < 34; i++) add(bars, 'rect', {x: 89 + Math.round(i * 11.6), y: 226, width: 1, height: 3, fill: '#fafafa'});
const up = (x, y, t, extra) => add(bars, 'text', Object.assign({transform: `translate(${x} ${y}) rotate(-90)`, fill: '#000', 'font-size': 19, 'font-weight': 300}, extra), t);
[[109,56,'6,211'],[149,96,'1,539'],[183,103,'737'],[218,103,'737'],[253,104,'571'],[288,105,'474'],[322,105,'409'],[357,106,'305'],[392,108,'165'],[427,109,'43'],[462,109,'11'],
 [109,172,'82,714'],[137,205,'24,088'],[195,219,'2,905'],[253,213,'11,700'],[299,210,'17,639'],[369,212,'13,920'],[404,219,'3,188'],[451,221,'717'],[477,216,'7,686']].forEach(a => up(...a));
['Accom..','Electro..','Health ..','Depart..','Motor ..','Buildin..','Grocer..','Autom..','Sporti..','Other ..','Beer, ..'].forEach((t, i) => up(113 + Math.round(i * 34.8), 230, t, {'text-anchor': 'end', fill: '#666', 'font-size': 18}));
up(27, 56, 'Contract La..', {'text-anchor': 'middle', fill: '#333', 'font-size': 18, 'font-weight': 600});
up(27, 168, 'Employer C..', {'text-anchor': 'middle', fill: '#333', 'font-size': 18, 'font-weight': 600});
[[34,'10K'],[77,'5K'],[107,'0K'],[135,'150K'],[168,'100K'],[200,'50K']].forEach(([y, t]) => add(bars, 'text', {x: 81, y, 'text-anchor': 'end', fill: '#666', 'font-weight': 300}, t));

const area = $('area');
[[45,'15K'],[130,'10K'],[214,'5K'],[285,'0K']].forEach(([y, t]) => add(area, 'text', {x: 33, y, 'text-anchor': 'end', fill: '#666', 'font-weight': 300}, t));
[[63,266,'869'],[99,284,'538'],[127,251,'1,764'],[190,254,'1,585'],[177,284,'419'],[216,184,'5,781'],[229,284,'552'],[266,254,'1,585'],[281,284,'993'],[320,258,'1,359'],[334,284,'800'],[386,177,'6,158'],[392,21,'16,392'],[412,271,'1,585'],[464,271,'579']]
  .forEach(([x, y, t]) => add(area, 'text', {x, y, 'text-anchor': 'middle', fill: '#000', 'font-size': 19, 'font-weight': 300}, t));
for (let i = 0; i < 16; i++) add(area, 'rect', {x: 65 + i * 26, y: 296, width: 2, height: 2, fill: '#777'});
for (let i = 1; i < 34; i++) add(area, 'rect', {x: 40 + i * 13, y: 292, width: 1, height: 3, fill: '#fafafa'});

[[338,80,'33.30%'],[339,104,'Accommodation and food services'],[138,62,'23.38%'],[139,86,'Retail Trade'],[100,173,'5.14%'],[102,197,'Motor vehicle and parts'],[136,230,'22.70%'],[138,254,'Food service and drinking places']]
  .forEach(([x, y, t]) => add($('pie'), 'text', {x, y, 'text-anchor': 'middle', fill: '#000'}, t));

const L = '#bbe4d8', A = '#aedcd6', B = '#a1d6d1', D = '#95cfd0', E = '#8ac8cf';
[[396,107,52,A],[480,80,34,L],[590,127,81,D],[472,160,39,L],[717,197,68,B],[362,171,21,L],[309,207,45,A],[411,206,39,L],[191,269,89,E],[371,346,109,'#71b9c8'],[485,244,45,A],[575,247,43,A],[656,306,57,A],[728,286,18,L],[780,284,33,L],[762,399,83,E],[544,347,62,B],[485,301,12,L],[485,404,19,L],[519,434,27,L],[633,408,46,A],[220,409,55,A],[291,462,33,L],[351,489,34,L],[279,516,21,L],[328,598,76,D],[455,505,69,B],[581,496,55,A],[674,484,39,L],[645,546,29,L],[535,584,44,A],[440,605,33,L],[479,584,12,L],[681,756,183,'#2c5985']]
  .forEach(([cx, cy, r, fill]) => add($('circles'), 'circle', {cx, cy, r, fill}));
[[145,83,'Food','#000'],[308,233,'Retail','#f4f8fa'],[308,258,'Trade','#f4f8fa']].forEach(([x, y, t, fill]) => add($('bubbles'), 'text', {x, y, 'text-anchor': 'middle', fill}, t));
</script>
</body>
</html>
